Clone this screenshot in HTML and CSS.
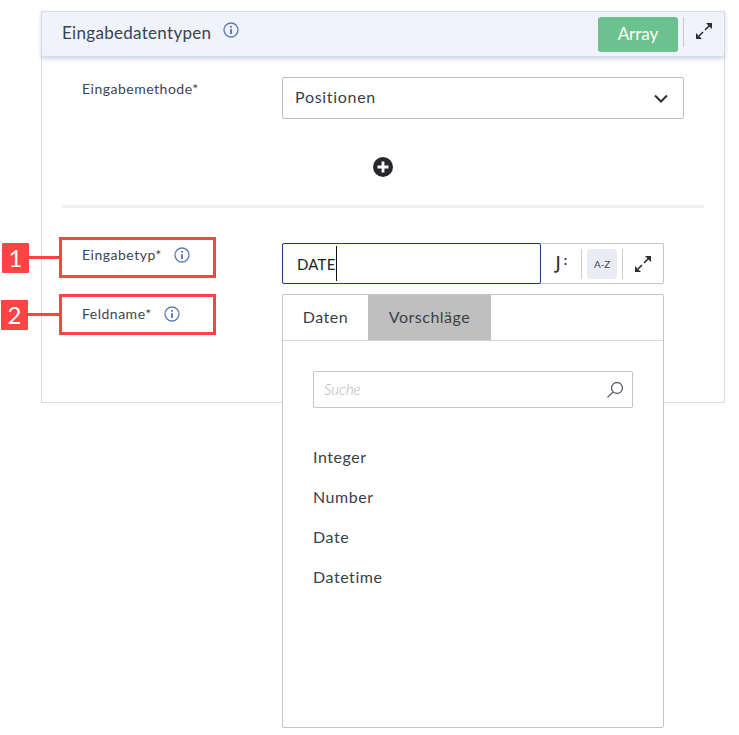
FILE: index.html
```html
<!DOCTYPE html>
<html lang="de">
<head>
<meta charset="utf-8">
<title>Eingabedatentypen</title>
<link rel="stylesheet" href="styles.css">
</head>
<body>
<div class="stage">
  <section class="panel">
    <header class="panel-head">
      <h2 class="panel-title">Eingabedatentypen</h2>
      <svg class="info info-head" viewBox="0 0 16 16"><circle cx="8" cy="8" r="7"/><circle class="dot" cx="8" cy="4.8" r="1.1"/><rect class="dot" x="7" y="7" width="2" height="5" rx=".4"/></svg>
      <div class="head-right">
        <button class="array-btn">Array</button>
        <span class="vsep"></span>
        <svg class="expand" viewBox="0 0 18 18"><path class="shaft" d="M3 15 8 10M15 3 10 8"/><path class="head" d="M11 1h6v6zM1 11v6h6l-2-2h-2v-2z"/></svg>
      </div>
    </header>
    <div class="panel-body">
      <div class="row row-method">
        <label class="field-label">Eingabemethode*</label>
        <div class="select"><span>Positionen</span>
          <svg class="chev" viewBox="0 0 14 9"><path d="M1 1.500 7 7.500 13 1.500"/></svg>
        </div>
      </div>
      <div class="add-row">
        <svg class="plus" viewBox="0 0 20 20"><circle cx="10" cy="10" r="10"/><path d="M10 4.500v11M4.500 10h11"/></svg>
      </div>
      <div class="divider"></div>
      <div class="row row-type">
        <label class="field-label">Eingabetyp* <svg class="info" viewBox="0 0 16 16"><circle cx="8" cy="8" r="7"/><circle class="dot" cx="8" cy="4.8" r="1.1"/><rect class="dot" x="7" y="7" width="2" height="5" rx=".4"/></svg></label>
        <div class="input-group">
          <div class="input-focus"><span>DATE</span><i class="caret"></i></div>
          <div class="tool tool-j">J<span class="colon">:</span></div>
          <span class="tsep"></span>
          <div class="tool"><span class="az">A-Z</span></div>
          <span class="tsep"></span>
          <div class="tool"><svg class="expand" viewBox="0 0 18 18"><path class="shaft" d="M3 15 8 10M15 3 10 8"/><path class="head" d="M11 1h6v6zM1 11v6h6l-2-2h-2v-2z"/></svg></div>
        </div>
      </div>
      <div class="row row-name">
        <label class="field-label">Feldname* <svg class="info" viewBox="0 0 16 16"><circle cx="8" cy="8" r="7"/><circle class="dot" cx="8" cy="4.8" r="1.1"/><rect class="dot" x="7" y="7" width="2" height="5" rx=".4"/></svg></label>
      </div>
    </div>
  </section>

  <div class="popup">
    <div class="tabs">
      <div class="tab">Daten</div>
      <div class="tab tab-active">Vorschläge</div>
    </div>
    <div class="popup-body">
      <div class="search"><span>Suche</span>
        <svg class="search-icon" viewBox="0 0 18 18"><circle cx="11" cy="7" r="5.500"/><path d="M7 11 1.500 16.500"/></svg>
      </div>
      <ul class="list">
        <li>Integer</li>
        <li>Number</li>
        <li>Date</li>
        <li>Datetime</li>
      </ul>
    </div>
  </div>

  <div class="note note-1"><b class="badge">1</b><i class="line"></i><span class="box"></span></div>
  <div class="note note-2"><b class="badge">2</b><i class="line"></i><span class="box"></span></div>
</div>
</body>
</html>
```
FILE: styles.css
```css
* { box-sizing: border-box; }
html, body { margin: 0; background: #fff; }
body { font-family: Lato, "Noto Sans", sans-serif; color: #3a3f4a; }
.stage { position: relative; width: 739px; height: 735px; padding: 11px 14px 0 41px; overflow: hidden; }

.panel { height: 392px; border: 1px solid #dcdcdc; border-top: 0; }
.panel-head { margin: 0 -1px; height: 46px; display: flex; align-items: center; padding: 0 6px 0 20px; background: #f1f3fa; border: 1px solid #d5dbe9; border-radius: 3px; box-shadow: 0 2px 4px rgba(150,165,205,.45); }
.panel-title { margin: -3px 0 0; font-size: 17px; font-weight: 400; letter-spacing: .3px; color: #3a4350; }
.info { width: 16px; height: 16px; fill: none; stroke: #5b7cb8; stroke-width: 1.300; vertical-align: -3px; }
.info .dot { fill: #5b7cb8; stroke: none; }
.info-head { margin: -8px 0 0 12px; }
.head-right { margin-left: auto; display: flex; align-items: center; }
.array-btn { width: 80px; height: 35px; border: 0; border-radius: 3px; background: #6cc28f; color: #fff; font: 400 17px Lato, sans-serif; padding: 0 0 2px; }
.vsep { width: 1px; height: 30px; margin: -4px 11px 0 5px; background: #c9c9c9; }
.expand { width: 18px; height: 18px; display: block; }
.expand .shaft { fill: none; stroke: #2d2f36; stroke-width: 1.600; }
.expand .head { fill: #2d2f36; }
.panel-head .expand { margin: -6px 5px 0 0; }

.panel-body { padding: 20px 20px 0 20px; }
.row { display: flex; }
.field-label { width: 220px; padding-left: 20px; font-size: 14px; letter-spacing: .5px; color: #3f444e; white-space: nowrap; }
.row-method .field-label { padding-top: 3px; }
.select { width: 402px; height: 42px; display: flex; align-items: center; justify-content: space-between; padding: 0 15px 0 12px; border: 1px solid #bdbdbd; border-radius: 2px; font-size: 16px; letter-spacing: .7px; color: #3a3f4a; }
.select span { margin-top: -4px; }
.chev { width: 14px; height: 9px; fill: none; stroke: #2d2f36; stroke-width: 2; }
.add-row { display: flex; justify-content: center; margin-top: 38px; width: 642px; }
.plus { width: 20px; height: 20px; }
.plus circle { fill: #26282e; }
.plus path { stroke: #fff; stroke-width: 2.800; fill: none; }
.divider { height: 3px; margin-top: 28px; background: #f1f1f1; }
.row-type { margin-top: 35px; }
.row-type .field-label { padding-top: 3px; }
.row-type .field-label .info, .row-name .field-label .info { margin-left: 8px; }
.input-group { width: 382px; height: 41px; display: flex; align-items: center; border: 1px solid #c4c4c4; border-radius: 2px; }
.input-focus { width: 260px; height: 41px; margin: 0 0 0 -1px; display: flex; align-items: center; padding-left: 14px; border: 1px solid #1d3f78; border-radius: 2px; font-size: 15px; letter-spacing: .2px; color: #22252c; }
.caret { width: 1px; height: 35px; background: #111; }
.tool { width: 40px; height: 31px; display: flex; align-items: center; justify-content: center; }
.tool-j { font-family: "Noto Sans", sans-serif; font-size: 18px; font-weight: 500; color: #2d2f36; padding-bottom: 3px; }
.colon { font-size: 12px; font-weight: 700; margin-left: 3px; margin-top: -4px; }
.tsep { width: 1px; height: 30px; background: #c9c9c9; }
.tool .az { width: 30px; height: 30px; border-radius: 4px; background: #e8edf5; display: flex; align-items: center; justify-content: center; font-size: 10px; color: #3f444e; }
.input-group .tool:last-child { width: 40px; }
.row-name { margin-top: 21px; }

.popup { position: absolute; left: 282px; top: 294px; width: 382px; height: 434px; background: #fff; border: 1px solid #c4c4c4; border-radius: 2px; }
.tabs { display: flex; height: 46px; border-bottom: 1px solid #d8d8d8; }
.tab { width: 85px; display: flex; align-items: center; justify-content: center; font-size: 16px; letter-spacing: .5px; color: #3a3f4a; padding-bottom: 2px; }
.tab-active { width: 123px; background: #bfbfbf; }
.popup-body { padding: 30px 30px 0; }
.search { height: 37px; display: flex; align-items: center; justify-content: space-between; padding: 0 8px 0 10px; border: 1px solid #c4c4c4; border-radius: 2px; font-size: 15px; font-style: italic; font-weight: 300; color: #b5b5b5; }
.search span { margin-top: -2px; }
.search-icon { width: 18px; height: 18px; fill: none; stroke: #59606b; stroke-width: 1.300; }
.list { list-style: none; margin: 29px 0 0; padding: 0; font-size: 16px; letter-spacing: .55px; color: #3a3f4a; }
.list li { height: 40px; line-height: 39px; }

.note { position: absolute; display: flex; align-items: center; left: 2px; height: 41px; }
.note-1 { top: 237px; }
.note-2 { top: 294px; left: 1px; }
.badge { width: 27px; height: 30px; display: flex; align-items: center; justify-content: center; background: #fb4444; color: #fff; font-size: 24px; font-weight: 400; border-radius: 1px; }
.line { width: 30px; height: 3px; background: #fb4444; }
.box { width: 157px; height: 41px; border: 3px solid #fb4444; }
.note-2 .line { width: 31px; }
```
